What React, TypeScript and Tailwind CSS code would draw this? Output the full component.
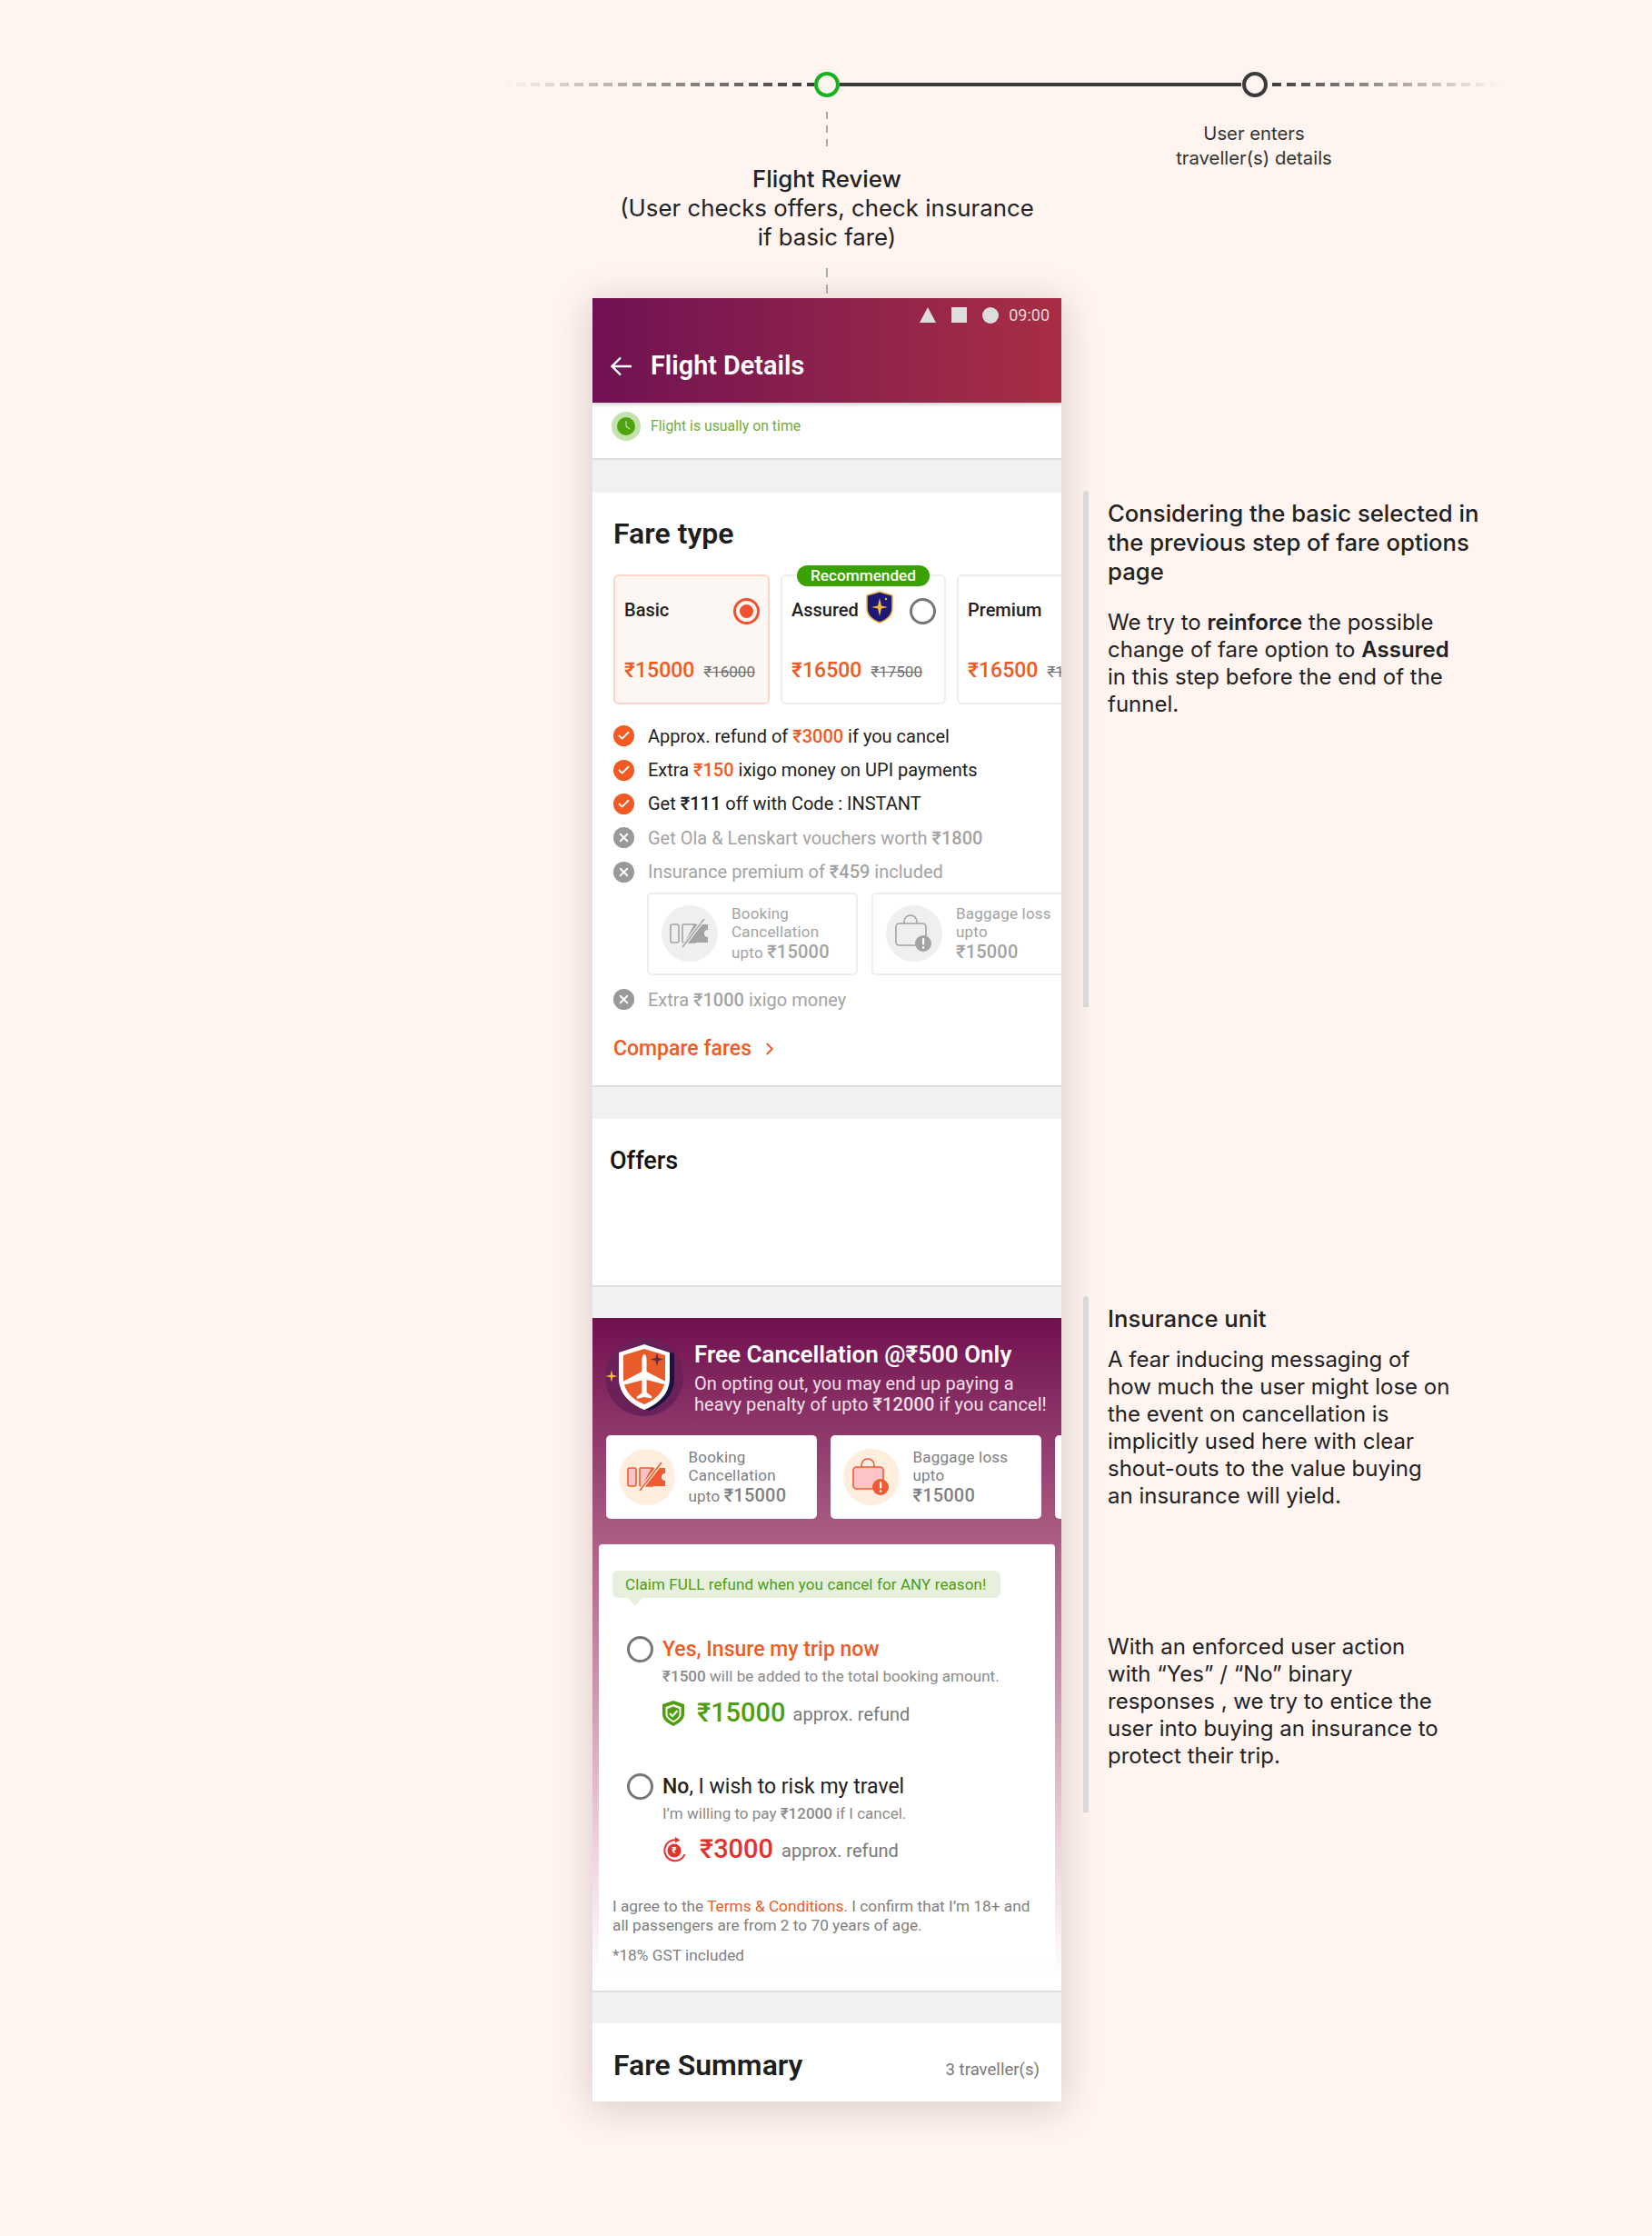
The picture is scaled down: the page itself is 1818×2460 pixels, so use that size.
import React from "react";
import { Check, ChevronRight, X } from "lucide-react";

const Ticket = ({ muted }: { muted?: boolean }) => {
  const c = muted ? "#a3a3a3" : "#ef5a33";
  const light = muted ? "#efefef" : "#fcc4c4";
  return (
    <svg width="44" height="34" viewBox="0 0 44 34" fill="none">
      <rect x="1" y="7" width="9" height="20" rx="2" fill={light} stroke={c} strokeWidth="1.6" />
      <path d="M14 8a1 1 0 0 1 1-1h13v20H15a1 1 0 0 1-1-1z" fill={light} stroke={c} strokeWidth="1.6" />
      <path d="M27 7h15v6a4 4 0 0 0 0 8v6H16z" fill={c} />
      <path d="M14 32 38 1" stroke={muted ? "#efefef" : "#ffeedd"} strokeWidth="4" />
      <path d="M14 32 38 1" stroke={c} strokeWidth="1.5" />
    </svg>
  );
};

const Bag = ({ muted }: { muted?: boolean }) => {
  const c = muted ? "#a3a3a3" : "#ef5a33";
  const light = muted ? "#efefef" : "#fcc4c4";
  return (
    <svg width="42" height="42" viewBox="0 0 42 42" fill="none">
      <path d="M10 10V8a7 7 0 0 1 14 0v2" stroke={c} strokeWidth="1.6" />
      <rect x="1" y="10" width="33" height="24" rx="3.5" fill={light} stroke={c} strokeWidth="1.6" />
      <circle cx="31" cy="32" r="9" fill={c} />
      <rect x="30" y="26" width="2.2" height="7.5" rx="1" fill="#fff" />
      <circle cx="31.1" cy="36.5" r="1.3" fill="#fff" />
    </svg>
  );
};

const BenefitCard = ({ kind, l1, l2, l3, amount, muted }: { kind: "t" | "b"; l1: string; l2: string; l3?: string; amount: string; muted?: boolean }) => (
  <div className={`w-[232px] shrink-0 flex items-center pl-[14px] rounded-[5px] ${muted ? "h-[91px] border-2 border-[#eeeeee] bg-white" : "h-[92px] bg-white"}`}>
    <div className={`w-[62px] h-[62px] shrink-0 rounded-full flex items-center justify-center ${muted ? "bg-[#efefef]" : "bg-[#ffeedd]"}`}>
      {kind === "t" ? <Ticket muted={muted} /> : <Bag muted={muted} />}
    </div>
    <div className={`ml-[15px] text-[17px] leading-[20px] tracking-[0.2px] ${muted ? "text-[#a3a3a3]" : "text-[#808080]"}`}>
      <div>{l1}</div>
      <div>{l2}</div>
      <div className="leading-[24px]">
        {l3 ? l3 + " " : ""}
        <span className="text-[20px] font-medium">{amount}</span>
      </div>
    </div>
  </div>
);

const Feature = ({ ok, children }: { ok?: boolean; children: React.ReactNode }) => (
  <div className={`h-[37.4px] flex items-center text-[20px] ${ok ? "text-[#222222]" : "text-[#a3a3a3]"}`}>
    <span className={`w-[23px] h-[23px] rounded-full flex items-center justify-center shrink-0 ${ok ? "bg-[#f15a22]" : "bg-[#999999]"}`}>
      {ok ? <Check size={15} color="#fff" strokeWidth={3} /> : <X size={15} color="#fff" strokeWidth={3} />}
    </span>
    <span className="ml-[15px] whitespace-nowrap">{children}</span>
  </div>
);

const Radio = ({ on }: { on?: boolean }) => (
  <span className={`w-[29px] h-[29px] shrink-0 rounded-full border-[3px] flex items-center justify-center ${on ? "border-[#f0502e]" : "border-[#777777]"}`}>
    {on && <span className="w-[15px] h-[15px] rounded-full bg-[#f0502e]" />}
  </span>
);

const FareCard = ({ name, price, old, on, extra, w, children }: { name: string; price: string; old: string; on?: boolean; extra?: React.ReactNode; w: string; children?: React.ReactNode }) => (
  <div className={`${w} h-[143px] shrink-0 relative rounded-[6px] border-2 pl-[10px] pr-[9px] ${on ? "border-[#fcd5c8] bg-[#fdf7f4]" : "border-[#eeeeee] bg-white"}`}>
    {children}
    <div className="h-[48px] mt-[14px] flex items-center justify-between">
      <div className="flex items-center -mt-[2px]">
        <span className="text-[20px] font-medium text-[#222222] whitespace-nowrap">{name}</span>
        {extra}
      </div>
      {name !== "Premium" && <Radio on={on} />}
    </div>
    <div className="mt-[25px] flex items-baseline whitespace-nowrap">
      <span className="text-[23px] font-medium text-[#f15a22]">{price}</span>
      <span className="ml-[10px] text-[17px] text-[#707070] line-through">{old}</span>
    </div>
  </div>
);

const Hot = ({ children }: { children: React.ReactNode }) => <span className="font-medium text-[#f15a22]">{children}</span>;
const B = ({ children }: { children: React.ReactNode }) => <span className="font-medium">{children}</span>;
const S = ({ children }: { children: React.ReactNode }) => <span className="font-semibold">{children}</span>;

export default function App() {
  return (
    <div className="w-[1818px] h-[2460px] bg-[#fff4f0] overflow-hidden font-['Roboto',sans-serif]">
      <svg className="block ml-[552px] mt-[73px]" width="1100" height="40" viewBox="0 0 1100 40" fill="none">
        <defs>
          <linearGradient id="fl" x1="0" x2="1" y1="0" y2="0">
            <stop offset="0" stopColor="#3a3a3a" stopOpacity="0" />
            <stop offset="1" stopColor="#3a3a3a" />
          </linearGradient>
          <linearGradient id="fr" x1="0" x2="1" y1="0" y2="0">
            <stop offset="0" stopColor="#3a3a3a" />
            <stop offset="1" stopColor="#3a3a3a" stopOpacity="0" />
          </linearGradient>
          <mask id="dm" maskUnits="userSpaceOnUse" x="0" y="0" width="1100" height="40">
            <path d="M0 20H1100" stroke="#fff" strokeWidth="4" strokeDasharray="10 6" />
          </mask>
        </defs>
        <rect x="0" y="18" width="344" height="4" fill="url(#fl)" mask="url(#dm)" />
        <rect x="842" y="18" width="256" height="4" fill="url(#fr)" mask="url(#dm)" />
        <path d="M372 20H814" stroke="#3a3a3a" strokeWidth="4" />
        <circle cx="358" cy="20" r="12" fill="#fff4f0" stroke="#16b31f" strokeWidth="4" />
        <circle cx="829" cy="20" r="12" fill="#fff4f0" stroke="#3a3a3a" strokeWidth="4" />
      </svg>

      <div className="flex ml-[652px]">
        <div className="w-[516px] shrink-0">
          <div className="h-[215px] flex flex-col items-center font-['Inter',sans-serif]">
            <svg className="mt-[10px] block" width="2" height="38"><path d="M1 0V38" stroke="#aaaaaa" strokeWidth="2" strokeDasharray="8 7" /></svg>
            <div className="mt-[20px] text-center text-[#222222] text-[25.800px] leading-[32px] whitespace-nowrap">
              <div className="font-medium">Flight Review</div>
              <div>(User checks offers, check insurance</div>
              <div>if basic fare)</div>
            </div>
            <svg className="mt-[18px] block relative z-10" width="2" height="33"><path d="M1 0V33" stroke="#aaaaaa" strokeWidth="2" strokeDasharray="10 8" /></svg>
          </div>
        </div>
        <div className="ml-[62px] w-[300px] pt-[20px] text-center text-[20.300px] leading-[27px] text-[#333333] font-['Inter',sans-serif]">
          <div>User enters</div>
          <div>traveller(s) details</div>
        </div>
      </div>

      <div className="flex ml-[652px]">
        <div className="w-[516px] h-[1984px] shrink-0 bg-[#f0f1f3] overflow-hidden shadow-[0_6px_40px_rgba(60,20,20,0.2)] flex flex-col">
          <div className="h-[115px] shrink-0 bg-gradient-to-r from-[#6f1152] to-[#a92d43] px-[21px] shadow-[0_2px_4px_rgba(0,0,0,0.2)] relative z-10">
            <div className="h-[37px] flex items-center justify-end gap-[17px] mr-[-8px]">
              <svg width="18" height="17" viewBox="0 0 18 17"><path d="M9 0 18 17H0z" fill="#dddddd" /></svg>
              <span className="w-[17px] h-[17px] bg-[#dddddd]" />
              <span className="w-[18px] h-[18px] rounded-full bg-[#dddddd]" />
              <span className="text-[18px] text-[#e4d4dc] -ml-[6px]">09:00</span>
            </div>
            <div className="flex items-center h-[60px] mt-[8px]">
              <svg width="24" height="22" viewBox="0 0 24 22" fill="none" className="-ml-[1px]">
                <path d="M23 11H2M11 1.500 1.500 11l9.500 9.500" stroke="#fff" strokeWidth="2.400" />
              </svg>
              <span className="ml-[20px] text-[28.800px] font-semibold text-white whitespace-nowrap">Flight Details</span>
            </div>
          </div>

          <div className="h-[63px] shrink-0 bg-white border-b-2 border-[#dedede] flex pl-[21px] pt-[10px]">
            <span className="w-[32px] h-[32px] rounded-full bg-[#c4e2ae] flex items-center justify-center">
              <svg width="20" height="20" viewBox="0 0 20 20"><circle cx="10" cy="10" r="10" fill="#4fa30f" /><path d="M10 4v6l4 3" stroke="#c4e2ae" strokeWidth="1.2" fill="none" /></svg>
            </span>
            <span className="ml-[11px] mt-[7px] text-[15.800px] leading-[18px] text-[#71ac41]">Flight is usually on time</span>
          </div>

          <div className="h-[654px] mt-[36px] shrink-0 bg-white border-b-2 border-[#dedede] pl-[23px]">
            <div className="pt-[24px] text-[32px] leading-[42px] font-semibold text-[#1e1e1e]">Fare type</div>
            <div className="flex gap-[12px] mt-[14px] pt-[10px] overflow-hidden h-[170px]">
              <FareCard w="w-[172px]" name="Basic" price="₹15000" old="₹16000" on />
              <FareCard
                w="w-[182px]"
                name="Assured"
                price="₹16500"
                old="₹17500"
                extra={
                  <svg className="ml-[8px] -mt-[6px]" width="30" height="36" viewBox="0 0 30 36">
                    <path d="M15 1 29 5v14c0 8-6 13-14 16C7 32 1 27 1 19V5z" fill="#1c1a75" stroke="#efb13c" strokeWidth="1.6" />
                    <path d="M15 8 17 16.500 24 18 17 19.500 15 28 13 19.500 6 18 13 16.500z" fill="#f4b73e" />
                    <circle cx="22" cy="9" r="1.2" fill="#f4b73e" />
                  </svg>
                }
              >
                <span className="absolute z-10 left-[16px] -top-[12px] w-[146px] h-[23px] rounded-full bg-[#3aa102] text-white text-[17.200px] leading-[23px] font-medium text-center">Recommended</span>
              </FareCard>
              <FareCard w="w-[182px]" name="Premium" price="₹16500" old="₹17500" />
            </div>
            <div className="-mt-[1px]">
              <Feature ok>Approx. refund of <Hot>₹3000</Hot> if you cancel</Feature>
              <Feature ok>Extra <Hot>₹150</Hot> ixigo money on UPI payments</Feature>
              <Feature ok>Get <B>₹111</B> off with Code : INSTANT</Feature>
              <Feature>Get Ola &amp; Lenskart vouchers worth <B>₹1800</B></Feature>
              <Feature>Insurance premium of <B>₹459</B> included</Feature>
              <div className="flex gap-[15px] ml-[37px] mt-[4px] mb-[8px]">
                <BenefitCard muted kind="t" l1="Booking" l2="Cancellation" l3="upto" amount="₹15000" />
                <BenefitCard muted kind="b" l1="Baggage loss" l2="upto" amount="₹15000" />
              </div>
              <Feature>Extra <B>₹1000</B> ixigo money</Feature>
            </div>
            <div className="mt-[21px] flex items-center text-[23px] leading-[30px] font-medium text-[#f15a22]">
              Compare fares
              <ChevronRight size={22} strokeWidth={2} className="ml-[9px]" />
            </div>
          </div>

          <div className="h-[185px] mt-[35px] shrink-0 bg-white border-b-2 border-[#dedede] pl-[19px] pt-[28px] text-[27px] leading-[36px] font-medium text-[#111111]">Offers</div>

          <div className="h-[742px] mt-[34px] shrink-0 border-b-2 border-[#dedede] bg-[linear-gradient(180deg,#70104f_0%,#ad6086_34%,#ecccd8_76%,#ffffff_98%)]">
            <div className="h-[129px] flex pl-[14px] pt-[22px]">
              <div className="w-[86px] h-[86px] shrink-0 rounded-full bg-[#6a2058] flex items-center justify-center relative">
                <svg width="86" height="86" viewBox="0 0 86 86">
                  <path d="M46 7 74 16V44C74 62 61 73 46 79 31 73 18 62 18 44V16Z" fill="#1c1240" transform="translate(2 1)" />
                  <path d="M43 7 71 16V44C71 62 58 73 43 79 28 73 15 62 15 44V16Z" fill="#fff" />
                  <path d="M43 12 66 19V44C66 58 56 68 43 73 30 68 20 58 20 44V19Z" fill="#e85c2c" />
                  <path d="M43 18c1.600 0 2.600 3 2.600 7v12l21 11v3.500l-21-5.500v14l5.500 4v2.500L43 65l-8.100 2v-2.500l5.500-4v-14l-21 5.500V48l21-11V25c0-4 1-7 2.600-7z" fill="#fff" />
                  <path d="M57 16l1.500 6 5.500 1.500-5.500 1.500-1.500 6-1.500-6L50 23.500l5.500-1.500z" fill="#5a2a4a" />
                  <path d="M7 35l1.200 5.800L14 42l-5.800 1.200L7 49l-1.200-5.800L0 42l5.800-1.200z" fill="#f6c02e" />
                </svg>
              </div>
              <div className="ml-[12px] whitespace-nowrap">
                <div className="text-[26px] leading-[36px] font-semibold text-white">Free Cancellation @₹500 Only</div>
                <div className="text-[20px] leading-[23px] text-[#f0e0e8] mt-[3px] tracking-[0.1px]">
                  <div>On opting out, you may end up paying a</div>
                  <div>heavy penalty of upto <B>₹12000</B> if you cancel!</div>
                </div>
              </div>
            </div>
            <div className="flex gap-[15px] pl-[14.500px] overflow-hidden">
              <BenefitCard kind="t" l1="Booking" l2="Cancellation" l3="upto" amount="₹15000" />
              <BenefitCard kind="b" l1="Baggage loss" l2="upto" amount="₹15000" />
              <span className="w-[232px] h-[92px] shrink-0 rounded-[5px] bg-white" />
            </div>

            <div className="mx-[7px] mt-[28px] h-[493px] bg-[linear-gradient(180deg,#ffffff_92%,rgba(255,255,255,0)_100%)] rounded-t-[4px] pl-[15px]">
              <div className="pt-[29px]">
                <div className="relative w-[427px] h-[30px] rounded-[6px] bg-[#e6f0dc] text-[#4d9d12] text-[17px] leading-[30px] pl-[14px] tracking-[0.1px] whitespace-nowrap">
                  Claim FULL refund when you cancel for ANY reason!
                  <svg className="absolute left-[17px] top-[30px]" width="16" height="9" viewBox="0 0 16 9"><path d="M0 0h16L8 9z" fill="#e6f0dc" /></svg>
                </div>
              </div>

              <div className="flex mt-[42px] ml-[16px]">
                <Radio />
                <div className="ml-[10px]">
                  <div className="text-[23px] leading-[29px] font-medium text-[#f15a22]">Yes, Insure my trip now</div>
                  <div className="text-[17px] leading-[22px] tracking-[0.05px] text-[#8a8a8a] mt-[4px] whitespace-nowrap"><B>₹1500</B> will be added to the total booking amount.</div>
                  <div className="flex items-center h-[40px] mt-[10px]">
                    <svg width="24" height="28" viewBox="0 0 24 28">
                      <path d="M12 0 24 4V15C24 21 18 25 12 28 6 25 0 21 0 15V4Z" fill="#4f9e0f" />
                      <path d="M12 4 20.500 7V15C20.500 19 16 22 12 24 8 22 3.500 19 3.500 15V7Z" fill="#fff" />
                      <path d="M12 6.500 18.500 9V15C18.500 18 15 20.500 12 22 9 20.500 5.500 18 5.500 15V9Z" fill="#4f9e0f" />
                      <path d="M8 14l3 3 5.500-6" stroke="#fff" strokeWidth="2" fill="none" />
                    </svg>
                    <span className="ml-[14px] text-[29px] font-medium text-[#4f9e0f]">₹15000</span>
                    <span className="ml-[8px] mt-[1px] text-[20px] text-[#7a7a7a]">approx. refund</span>
                  </div>
                </div>
              </div>

              <div className="flex mt-[46px] ml-[16px]">
                <Radio />
                <div className="ml-[10px]">
                  <div className="text-[23px] leading-[29px] text-[#222222]"><B>No</B>, I wish to risk my travel</div>
                  <div className="text-[17px] leading-[22px] text-[#8a8a8a] mt-[4px] whitespace-nowrap">I’m willing to pay <B>₹12000</B> if I cancel.</div>
                  <div className="flex items-center h-[40px] mt-[9px]">
                    <span className="relative w-[26px] h-[28px] flex items-center justify-center">
                      <svg className="absolute inset-0" width="26" height="28" viewBox="0 0 26 28" fill="none">
                        <path d="M15 3.300A11.500 11.500 0 1 0 24.500 19" stroke="#e2332f" strokeWidth="2" />
                        <path d="M14 0l5.500 3.500-5.500 3z" fill="#e2332f" />
                        <circle cx="13" cy="15" r="7.500" fill="#e2332f" />
                      </svg>
                      <span className="relative mt-[2px] text-[10px] leading-[12px] font-bold text-white">₹</span>
                    </span>
                    <span className="ml-[15px] text-[29px] font-medium text-[#e2332f]">₹3000</span>
                    <span className="ml-[9px] mt-[1px] text-[20px] text-[#7a7a7a]">approx. refund</span>
                  </div>
                </div>
              </div>

              <div className="mt-[32px] text-[17.250px] leading-[20.500px] text-[#808080] whitespace-nowrap">
                <div>I agree to the <span className="text-[#f15a22]">Terms &amp; Conditions</span>. I confirm that I’m 18+ and</div>
                <div>all passengers are from 2 to 70 years of age.</div>
              </div>
              <div className="mt-[13px] text-[17.250px] leading-[20px] text-[#808080]">*18% GST included</div>
            </div>
          </div>

          <div className="h-[86px] mt-[34px] shrink-0 bg-white flex justify-between pl-[23px] pr-[24px]">
            <span className="mt-[25px] text-[32px] leading-[42px] font-semibold text-[#1e1e1e]">Fare Summary</span>
            <span className="mt-[39px] text-[18.600px] leading-[24px] text-[#7a7a7a]">3 traveller(s)</span>
          </div>
        </div>

        <div className="ml-[24px] mt-[212px] font-['Inter',sans-serif] text-[#222222]">
          <div className="flex h-[568px]">
            <span className="w-[6px] rounded-t-[3px] bg-[#d8d8d8] shrink-0" />
            <div className="ml-[21px] pt-[9px] w-[430px]">
              <div className="text-[25.700px] leading-[32px] font-medium whitespace-nowrap">
                <div>Considering the basic selected in</div>
                <div>the previous step of fare options</div>
                <div>page</div>
              </div>
              <div className="mt-[25px] text-[24px] leading-[30px] whitespace-nowrap">
                <div>We try to <S>reinforce</S> the possible</div>
                <div>change of fare option to <S>Assured</S></div>
                <div>in this step before the end of the</div>
                <div>funnel.</div>
              </div>
            </div>
          </div>
          <div className="flex h-[568px] mt-[318px]">
            <span className="w-[6px] rounded-t-[3px] bg-[#d8d8d8] shrink-0" />
            <div className="ml-[21px] pt-[9px] w-[430px] whitespace-nowrap">
              <div className="text-[25.700px] leading-[32px] font-medium">Insurance unit</div>
              <div className="mt-[14px] text-[24px] leading-[30px]">
                <div>A fear inducing messaging of</div>
                <div>how much the user might lose on</div>
                <div>the event on cancellation is</div>
                <div>implicitly used here with clear</div>
                <div>shout-outs to the value buying</div>
                <div>an insurance will yield.</div>
              </div>
              <div className="mt-[136px] text-[24px] leading-[30px]">
                <div>With an enforced user action</div>
                <div>with “Yes” / “No” binary</div>
                <div>responses , we try to entice the</div>
                <div>user into buying an insurance to</div>
                <div>protect their trip.</div>
              </div>
            </div>
          </div>
        </div>
      </div>
    </div>
  );
}
